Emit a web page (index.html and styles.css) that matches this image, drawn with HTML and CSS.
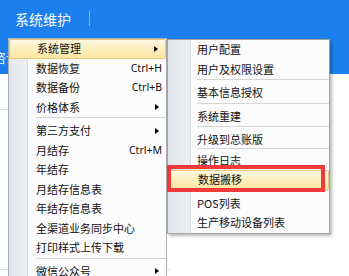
FILE: index.html
```html
<!DOCTYPE html>
<html lang="zh-CN">
<head>
    <meta charset="UTF-8">
    <meta name="viewport" content="width=device-width, initial-scale=1.0">
    <title>系统维护</title>
    <link rel="stylesheet" href="styles.css">
</head>
<body>
    <div class="header">
        <div class="topbar">
            <span class="title">系统维护</span>
            <span class="divider"></span>
        </div>
        <div class="nav">
            <span class="nav-item">咨询</span>
        </div>
    </div>
    <div class="content">
        <div class="line-row first"></div>
        <div class="line-row second"></div>
    </div>

    <div class="menu main-menu">
        <div class="item active">系统管理<span class="arrow"></span></div>
        <div class="item">数据恢复<span class="key">Ctrl+H</span></div>
        <div class="item">数据备份<span class="key">Ctrl+B</span></div>
        <div class="item">价格体系<span class="arrow"></span></div>
        <div class="sep"></div>
        <div class="item">第三方支付<span class="arrow"></span></div>
        <div class="item">月结存<span class="key">Ctrl+M</span></div>
        <div class="item">年结存</div>
        <div class="item">月结存信息表</div>
        <div class="item">年结存信息表</div>
        <div class="item">全渠道业务同步中心</div>
        <div class="item">打印样式上传下载</div>
        <div class="sep"></div>
        <div class="item">微信公众号<span class="arrow"></span></div>

        <div class="menu sub-menu">
            <div class="item">用户配置</div>
            <div class="item">用户及权限设置</div>
            <div class="sep"></div>
            <div class="item">基本信息授权</div>
            <div class="sep"></div>
            <div class="item">系统重建</div>
            <div class="sep"></div>
            <div class="item">升级到总账版</div>
            <div class="sep tight"></div>
            <div class="item">操作日志</div>
            <div class="item active">数据搬移</div>
            <div class="sep"></div>
            <div class="item">POS列表</div>
            <div class="item">生产移动设备列表</div>
        </div>
    </div>

    <div class="mark"></div>
</body>
</html>
```

FILE: styles.css
```css
* {
    margin: 0;
    padding: 0;
    box-sizing: border-box;
}
body {
    width: 349px;
    height: 276px;
    overflow: hidden;
    position: relative;
    background: #fff;
    font-family: "Noto Sans CJK SC", "Noto Sans", sans-serif;
}
.header {
    background: #1b80ee;
    height: 74px;
    color: #fff;
}
.topbar {
    height: 37px;
    display: flex;
    align-items: center;
    padding-left: 15px;
}
.title {
    font-size: 14px;
    line-height: 16px;
}
.divider {
    width: 1px;
    height: 15px;
    margin-left: 18px;
    background: rgba(255, 255, 255, 0.45);
}
.nav {
    height: 37px;
    display: flex;
    align-items: center;
}
.nav-item {
    font-size: 12px;
    margin-left: -6px;
    margin-top: 4px;
}
.content {
    width: 170px;
}
.line-row {
    border-bottom: 1px solid #dcdfe3;
}
.line-row.first {
    height: 36px;
}
.line-row.second {
    height: 160px;
}

.menu {
    position: absolute;
    font-size: 11px;
    color: #111;
}
.main-menu {
    left: 8px;
    top: 38px;
    width: 159px;
    height: 238px;
    overflow: visible;
    border: 1px solid #a9aeb4;
    border-bottom: none;
    background: linear-gradient(to right, #e2e6ea 0, #eceff2 18px, #d8dce1 18px, #d8dce1 19px, #fff 19px, #fff 20px, #fcfcfc 20px);
}
.sub-menu {
    left: 158px;
    top: 0;
    width: 163px;
    border: 1px solid #a3a3a3;
    box-shadow: 2px 2px 3px rgba(0, 0, 0, 0.28);
    background: linear-gradient(to right, #e2e6ea 0, #eceff2 22px, #d8dce1 22px, #d8dce1 23px, #fff 23px, #fff 24px, #fcfcfc 24px);
}
.item {
    height: 19.5px;
    line-height: 19.5px;
    padding-left: 27px;
    padding-right: 4px;
    display: flex;
    align-items: center;
    justify-content: space-between;
    white-space: nowrap;
}
.sub-menu .item {
    padding-left: 29px;
}
.item.active {
    border: 1px solid #e5c67c;
    border-radius: 2px;
    background: linear-gradient(to bottom, #fef8e4, #fdefbf 45%, #fce7a2);
}
.key {
    font-family: "Noto Sans", sans-serif;
    font-size: 10.5px;
}
.arrow {
    width: 0;
    height: 0;
    margin-right: 3px;
    border-left: 4px solid #000;
    border-top: 3.5px solid transparent;
    border-bottom: 3.5px solid transparent;
}
.sep {
    height: 4px;
    margin-left: 27px;
    display: flex;
    align-items: center;
}
.sep::before {
    content: "";
    flex: 1;
    height: 2px;
    border-top: 1px solid #d5d5d5;
    border-bottom: 1px solid #fff;
}
.sub-menu .sep {
    margin-left: 29px;
}
.sep.tight {
    height: 1px;
}

.mark {
    position: absolute;
    left: 167px;
    top: 165px;
    width: 158px;
    height: 27px;
    border: 4px solid #f23a3a;
}
```
